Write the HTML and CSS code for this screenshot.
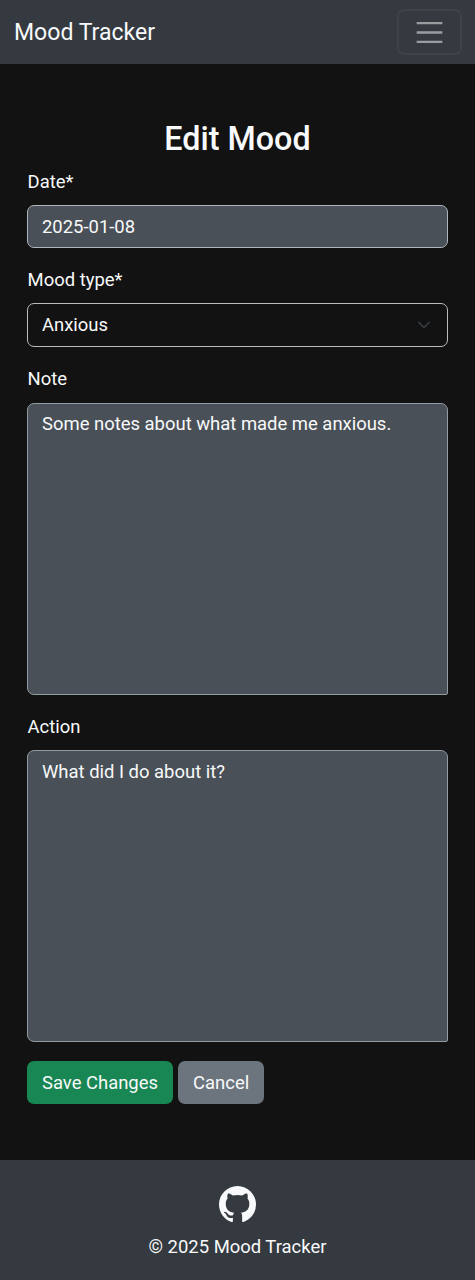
FILE: index.html
```html
<!DOCTYPE html>
<html lang="en">
<head>
<meta charset="utf-8">
<meta name="viewport" content="width=device-width, initial-scale=1">
<title>Mood Tracker</title>
<link rel="stylesheet" href="styles.css">
</head>
<body>
<header class="navbar">
  <a class="brand" href="#">Mood Tracker</a>
  <button class="toggler" type="button" aria-label="Toggle navigation">
    <svg class="toggler-icon" viewBox="0 0 30 30"><path d="M4 7h22M4 15h22M4 23h22"/></svg>
  </button>
</header>
<main class="content">
  <h1 class="title">Edit Mood</h1>
  <form class="form">
    <div class="field">
      <label class="label" for="date">Date*</label>
      <input class="control" id="date" type="text" value="2025-01-08">
    </div>
    <div class="field">
      <label class="label" for="mood">Mood type*</label>
      <div class="select" id="mood">
        <span>Anxious</span>
        <svg class="chevron" viewBox="0 0 16 16"><path d="m2 5 6 6 6-6"/></svg>
      </div>
    </div>
    <div class="field field-note">
      <label class="label" for="note">Note</label>
      <textarea class="control area" id="note" spellcheck="false">Some notes about what made me anxious.</textarea>
    </div>
    <div class="field">
      <label class="label" for="action">Action</label>
      <textarea class="control area" id="action" spellcheck="false">What did I do about it?</textarea>
    </div>
    <div class="actions">
      <button class="btn btn-save" type="button">Save Changes</button>
      <button class="btn btn-cancel" type="button">Cancel</button>
    </div>
  </form>
</main>
<footer class="footer">
  <svg class="github" viewBox="0 0 16 16"><path d="M8 0C3.58 0 0 3.58 0 8c0 3.54 2.29 6.53 5.47 7.59.4.07.55-.17.55-.38 0-.19-.01-.82-.01-1.49-2.01.37-2.53-.49-2.69-.94-.09-.23-.48-.94-.82-1.13-.28-.15-.68-.52-.01-.53.63-.01 1.08.58 1.23.82.72 1.21 1.87.87 2.33.66.07-.52.28-.87.51-1.07-1.78-.2-3.64-.89-3.64-3.95 0-.87.31-1.59.82-2.15-.08-.2-.36-1.02.08-2.12 0 0 .67-.21 2.2.82.64-.18 1.32-.27 2-.27s1.36.09 2 .27c1.53-1.04 2.2-.82 2.2-.82.44 1.1.16 1.92.08 2.12.51.56.82 1.27.82 2.15 0 3.07-1.87 3.75-3.65 3.95.29.25.54.73.54 1.48 0 1.07-.01 1.93-.01 2.2 0 .21.15.46.55.38A8.01 8.01 0 0 0 16 8c0-4.42-3.58-8-8-8"/></svg>
  <p class="copyright">© 2025 Mood Tracker</p>
</footer>
</body>
</html>
```
FILE: styles.css
```css
* {
  box-sizing: border-box;
}

body {
  margin: 0;
  min-height: 1280px;
  display: flex;
  flex-direction: column;
  background: #121212;
  color: #f8f9fa;
  font: 400 18.45px/28px Roboto, "Liberation Sans", sans-serif;
}

.navbar {
  height: 64px;
  padding: 0 13px 0 14px;
  display: flex;
  align-items: center;
  justify-content: space-between;
  background: #343a40;
}

.brand {
  padding-top: 1px;
  color: #f8f9fa;
  font-size: 23.06px;
  text-decoration: none;
}

.toggler {
  width: 65px;
  height: 46px;
  padding: 0;
  display: flex;
  align-items: center;
  justify-content: center;
  background: transparent;
  border: 2px solid #3d4349;
  border-radius: 7px;
}

.toggler-icon {
  width: 37px;
  height: 35px;
  margin-right: 1px;
  fill: none;
  stroke: #9a9da0;
  stroke-width: 2;
}

.content {
  flex: 1;
  padding: 55px 27px 0;
}

.title {
  margin: 0 0 10px;
  font-size: 32.3px;
  line-height: 40px;
  font-weight: 500;
  text-align: center;
}

.form,
.field {
  display: flex;
  flex-direction: column;
}

.form {
  gap: 19px;
}

.field {
  gap: 8px;
}

.field-note {
  gap: 9px;
}

.label {
  padding: 0 0 2px 0.6px;
  line-height: 26px;
}

.control,
.select {
  width: 100%;
  height: 43px;
  margin: 0;
  padding: 0 14px;
  color: #f8f9fa;
  font: inherit;
  background: #495057;
  border: 1px solid #adb5bd;
  border-radius: 7px;
}

.select {
  height: 44px;
  display: flex;
  align-items: center;
  justify-content: space-between;
  padding-right: 16px;
  background: transparent;
  border-color: #b9bdc1;
}

.chevron {
  width: 14px;
  height: 14px;
  fill: none;
  stroke: #343a40;
  stroke-width: 2;
  stroke-linecap: round;
  stroke-linejoin: round;
}

.area {
  height: 292px;
  padding: 7px 14px;
  resize: none;
  border-color: #939ba2;
  border-bottom-right-radius: 2px;
}

.field-note .area {
  padding-top: 6px;
}

.actions {
  display: flex;
  gap: 5px;
}

.btn {
  height: 43px;
  padding: 1px 15px 0;
  border: 0;
  border-radius: 7px;
  color: #f8f9fa;
  font: inherit;
}

.btn-save {
  background: #198754;
}

.btn-cancel {
  background: #6c757d;
}

.footer {
  height: 120.5px;
  padding-top: 26px;
  display: flex;
  flex-direction: column;
  align-items: center;
  background: #343a40;
}

.github {
  width: 37px;
  height: 37px;
  fill: #f8f9fa;
}

.copyright {
  margin: 10px 0 0;
}
```
